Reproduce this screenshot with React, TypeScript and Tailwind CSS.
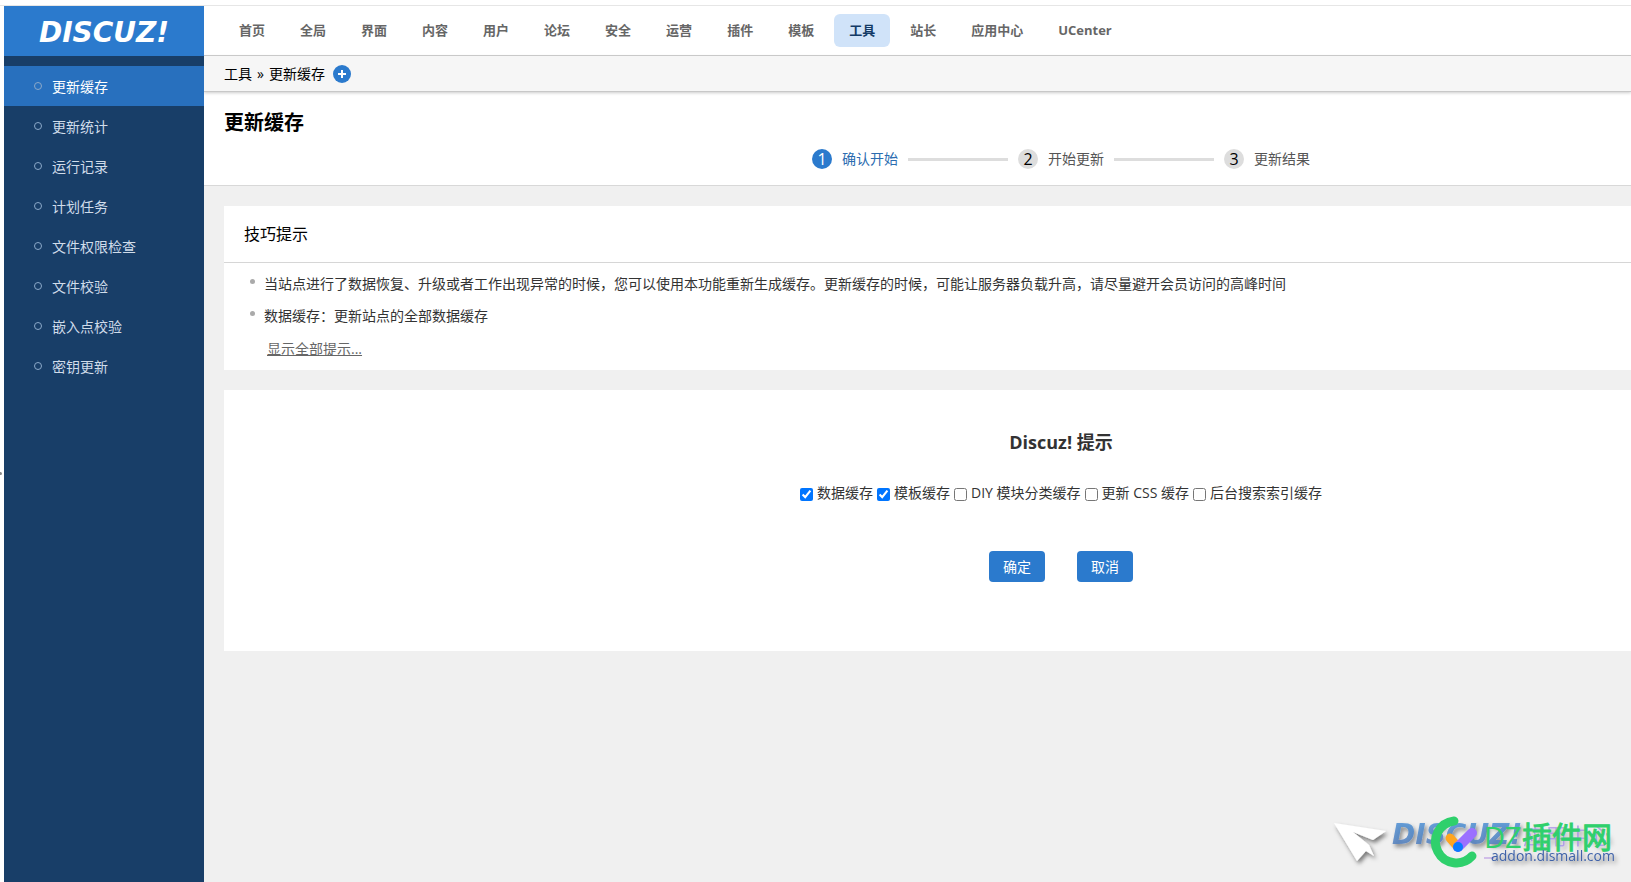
import { Fragment } from "react";
import clsx from "clsx";

const NAV = ["首页", "全局", "界面", "内容", "用户", "论坛", "安全", "运营", "插件", "模板", "工具", "站长", "应用中心", "UCenter"];

const MENU = ["更新缓存", "更新统计", "运行记录", "计划任务", "文件权限检查", "文件校验", "嵌入点校验", "密钥更新"];

const STEPS = ["确认开始", "开始更新", "更新结果"];

const TIPS = [
	"当站点进行了数据恢复、升级或者工作出现异常的时候，您可以使用本功能重新生成缓存。更新缓存的时候，可能让服务器负载升高，请尽量避开会员访问的高峰时间",
	"数据缓存：更新站点的全部数据缓存",
];

const CACHES = [
	{ id: "data", label: "数据缓存", checked: true },
	{ id: "tpl", label: "模板缓存", checked: true },
	{ id: "block", label: "DIY 模块分类缓存", checked: false },
	{ id: "css", label: "更新 CSS 缓存", checked: false },
	{ id: "search", label: "后台搜索索引缓存", checked: false },
];

function Sidebar() {
	return (
		<aside className="z-20 w-[200px] shrink-0 bg-[#183e68]">
			<a
				href="#home"
				className="flex h-[50px] items-center justify-center bg-[#2b7acd] pt-1 font-['DejaVu_Sans',sans-serif] text-[28px] leading-none font-bold text-white italic"
			>
				DISCUZ!
			</a>
			<ul className="mt-2.5">
				{MENU.map((item, i) => (
					<li key={item}>
						<a
							href="#menu"
							className={clsx(
								"flex h-10 items-center gap-2.5 pt-0.5 pl-[30px] text-sm",
								i === 0 ? "bg-[#2870be] text-white" : "text-[#d0dcea]",
							)}
						>
							<span className="mb-0.5 h-2 w-2 rounded-full border border-[#8ca9c9]" />
							{item}
						</a>
					</li>
				))}
			</ul>
		</aside>
	);
}

function TopNav() {
	return (
		<nav className="flex h-[50px] items-center gap-[5px] border-b border-[#c8c8c8] bg-white pr-5 pb-px pl-5">
			{NAV.map((item) => (
				<a
					key={item}
					href="#nav"
					className={clsx(
						"flex h-[33px] shrink-0 items-center rounded-md px-[15px] pt-px text-[13px] font-bold",
						item === "工具" ? "bg-[#d0e3f9] text-[#123a66]" : "text-[#666]",
					)}
				>
					{item}
				</a>
			))}
		</nav>
	);
}

function Steps() {
	return (
		<ol className="mt-3 flex items-center justify-center gap-2.5 pl-[287px] text-sm">
			{STEPS.map((step, i) => (
				<Fragment key={step}>
					{i > 0 && <li aria-hidden className="h-[3px] w-[100px] bg-[#ddd]" />}
					<li className={clsx("flex h-5 items-center gap-2.5", i === 0 ? "text-[#2b6cb0]" : "text-[#555]")}>
						<span
							className={clsx(
								"flex h-5 w-5 items-center justify-center rounded-full text-base",
								i === 0 ? "bg-[#2b7acd] text-white" : "bg-[#ddd] text-black",
							)}
						>
							{i + 1}
						</span>
						{step}
					</li>
				</Fragment>
			))}
		</ol>
	);
}

function Watermark() {
	return (
		<svg
			viewBox="0 0 321 92"
			className="pointer-events-none absolute right-0 bottom-0 h-[92px] w-[321px] font-['Open_Sans','Noto_Sans_CJK_SC',sans-serif]"
		>
			<defs>
				<filter id="drop" x="-20%" y="-20%" width="150%" height="160%">
					<feDropShadow dx="2" dy="3" stdDeviation="2" floodColor="#000" floodOpacity="0.5" />
				</filter>
				<linearGradient id="ink" x1="0" y1="0" x2="0" y2="1">
					<stop offset="0" stopColor="#4c93d8" />
					<stop offset="1" stopColor="#5579b5" />
				</linearGradient>
			</defs>
			{/* paper plane */}
			<g filter="url(#drop)" fill="#fff">
				<path d="M24 33 L76 41 L63 50 L43 42 L59 55 L64 66 L56 61 L47 71 Z" />
			</g>
			<g filter="url(#drop)">
				<text x="82" y="54" fontSize="28" fontStyle="italic" fontWeight="700" fontFamily="DejaVu Sans" fill="url(#ink)" opacity="0.85">
					DISCUZ!
				</text>
				<text x="213" y="54" fontSize="22" fill="#9a7ee6" opacity="0.65">
					应用中心
				</text>
			</g>
			<path d="M174 68 H184" stroke="#b18be0" />
			{/* round mark */}
			<path d="M144 31 A21 21 0 1 0 162 66" fill="none" stroke="#2fd06c" strokeWidth="9" strokeLinecap="round" />
			<path d="M140 48 L148 57" stroke="#ffa51f" strokeWidth="9" strokeLinecap="round" />
			<path d="M148 57 L162 43" stroke="#9b70ff" strokeWidth="10" strokeLinecap="round" />
			<circle cx="148" cy="57" r="5" fill="#0a7bff" />
			<text x="174" y="58" fontSize="29" fill="#2fd06c">
				DZ
			</text>
			<text x="212" y="58" fontSize="30" fill="#2fd06c" stroke="#2fd06c">
				插件网
			</text>
			<text x="181" y="71" fontSize="14" fill="#3f62a8" filter="url(#drop)">
				addon.dismall.com
			</text>
		</svg>
	);
}

export default function App() {
	return (
		<div className="relative flex min-h-screen flex-col overflow-hidden bg-white font-['Open_Sans','Noto_Sans_CJK_SC',sans-serif] text-sm text-[#333]">
			<div className="h-1.5 border-b border-[#e6e6e6]" />
			<div className="flex flex-1">
				{/* collapsed frame handle */}
				<div className="flex w-1 shrink-0 items-center">
					<span className="mb-[-59px] h-[3px] w-0.5 rounded-r-full bg-[#888]" />
				</div>
				<Sidebar />
				<div className="flex min-w-0 flex-1 flex-col bg-[#f0f0f0]">
					<TopNav />
					<div className="z-10 flex h-9 items-center gap-2 border-b border-[#c8c8c8] bg-[#f6f6f6] pl-5 text-black shadow-[0_1px_3px_#ccc]">
						<span className="flex gap-[5px]">
							<span>工具</span>
							<span>»</span>
							<span>更新缓存</span>
						</span>
						<button type="button" aria-label="添加常用操作" className="flex h-[18px] w-[18px] items-center justify-center rounded-full bg-[#2b7acd]">
							<svg viewBox="0 0 18 18" className="h-[18px] w-[18px]">
								<path d="M9 5 V13 M5 9 H13" stroke="#fff" strokeWidth="2" />
							</svg>
						</button>
					</div>
					<header className="border-b border-[#d8d8d8] bg-white pt-[17px] pb-4">
						<h1 className="pl-5 text-xl leading-7 font-bold text-black">更新缓存</h1>
						<Steps />
					</header>

					<main className="flex flex-col gap-5 pt-5 pl-5">
						<section className="bg-white">
							<h2 className="flex h-[57px] items-center border-b border-[#d6d6d6] pl-5 text-base text-black">技巧提示</h2>
							<ul className="pt-[5px] pl-[26px]">
								{TIPS.map((tip) => (
									<li key={tip} className="flex leading-8">
										<span className="mt-[11px] mr-[9px] h-[5px] w-[5px] shrink-0 rounded-full bg-[#aaa]" />
										{tip}
									</li>
								))}
							</ul>
							<div className="pt-px pb-[5px] pl-[43px] leading-8">
								<a href="#tips" className="text-[#666] underline">
									显示全部提示...
								</a>
							</div>
						</section>

						<form className="bg-white pt-[39px] pb-[69px] pl-[267px]">
							<h3 className="text-center text-lg leading-[26px] font-bold">Discuz! 提示</h3>
							<div className="mt-[26px] flex justify-center gap-1 leading-6">
								{CACHES.map((c) => (
									<label key={c.id} className="flex shrink-0 items-center gap-1">
										<input type="checkbox" name={c.id} defaultChecked={c.checked} className="mt-0.5 h-[13px] w-[13px]" />
										{c.label}
									</label>
								))}
							</div>
							<div className="mt-[46px] flex justify-center gap-8">
								{["确定", "取消"].map((text) => (
									<button key={text} type="button" className="h-[31px] w-14 rounded-sm bg-[#2b7acd] text-white">
										{text}
									</button>
								))}
							</div>
						</form>
					</main>
				</div>
			</div>
			<Watermark />
		</div>
	);
}
